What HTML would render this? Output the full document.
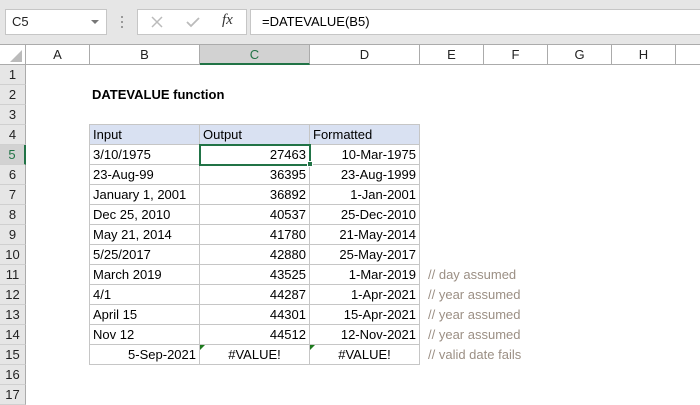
<!DOCTYPE html>
<html><head><style>
*{margin:0;padding:0;box-sizing:border-box}
body{width:700px;height:400px;overflow:hidden;background:#fff;font-family:"Liberation Sans",sans-serif;font-size:13px;color:#000;position:relative}
.a{position:absolute}
.hdr{background:#e6e6e6}
.ch{position:absolute;top:45px;height:20px;text-align:center;line-height:20px;color:#222;border-right:1px solid #ababab;font-size:13px}
.rh{position:absolute;left:0;width:26px;height:20px;text-align:center;line-height:20px;color:#222;background:#e6e6e6;border-bottom:1px solid #d0d0d0;border-right:1px solid #ababab;font-size:13px}
.c{position:absolute;height:21px;line-height:20px;border:1px solid #c6c6c6;padding:0 3px;white-space:nowrap;overflow:visible}
.r{text-align:right}
.cm{position:absolute;color:#9b8f84;font-size:13px;line-height:20px}
.tri{position:absolute;width:0;height:0;border-top:5px solid #1e7a1e;border-right:5px solid transparent}
</style></head><body>
<div class="a hdr" style="left:0;top:0;width:700px;height:45px;background:#e6e6e6;border-bottom:1px solid #ababab"></div>
<div class="a" style="left:5px;top:9px;width:102px;height:26px;background:#fff;border:1px solid #c6c6c6;line-height:24px;padding-left:6px;color:#222">C5</div>
<div class="a" style="left:91px;top:20px;width:0;height:0;border-left:4px solid transparent;border-right:4px solid transparent;border-top:4px solid #777"></div>
<div class="a" style="left:121px;top:16px;width:2px;height:2px;background:#999"></div>
<div class="a" style="left:121px;top:21px;width:2px;height:2px;background:#999"></div>
<div class="a" style="left:121px;top:26px;width:2px;height:2px;background:#999"></div>
<div class="a" style="left:137px;top:9px;width:110px;height:26px;background:#fff;border:1px solid #c6c6c6"></div>
<svg class="a" style="left:150px;top:15px" width="14" height="14"><path d="M2 2L12 12M12 2L2 12" stroke="#bbb" stroke-width="1.5"/></svg>
<svg class="a" style="left:185px;top:15px" width="16" height="14"><path d="M2 7L6 11L14 3" stroke="#bbb" stroke-width="1.8" fill="none"/></svg>
<div class="a" style="left:222px;top:12px;font-family:'Liberation Serif',serif;font-style:italic;font-size:15px;color:#333">fx</div>
<div class="a" style="left:250px;top:9px;width:460px;height:26px;background:#fff;border:1px solid #c6c6c6;line-height:24px;padding-left:11px;color:#000">=DATEVALUE(B5)</div>
<div class="a" style="left:0;top:64px;width:700px;height:1px;background:#ababab"></div>
<div class="ch" style="left:0;width:26px"><svg style="position:absolute;right:3px;bottom:3px" width="12" height="12"><path d="M12 0L12 12L0 12Z" fill="#bbb"/></svg></div>
<div class="ch" style="left:26px;width:64px">A</div>
<div class="ch" style="left:90px;width:110px">B</div>
<div class="ch" style="left:200px;width:110px;background:#d2d2d2;border-bottom:2px solid #217346;color:#217346">C</div>
<div class="ch" style="left:310px;width:110px">D</div>
<div class="ch" style="left:420px;width:64px">E</div>
<div class="ch" style="left:484px;width:64px">F</div>
<div class="ch" style="left:548px;width:64px">G</div>
<div class="ch" style="left:612px;width:64px">H</div>
<div class="rh" style="top:65px">1</div>
<div class="rh" style="top:85px">2</div>
<div class="rh" style="top:105px">3</div>
<div class="rh" style="top:125px">4</div>
<div class="rh" style="top:145px;background:#d2d2d2;border-right:2px solid #217346;color:#217346">5</div>
<div class="rh" style="top:165px">6</div>
<div class="rh" style="top:185px">7</div>
<div class="rh" style="top:205px">8</div>
<div class="rh" style="top:225px">9</div>
<div class="rh" style="top:245px">10</div>
<div class="rh" style="top:265px">11</div>
<div class="rh" style="top:285px">12</div>
<div class="rh" style="top:305px">13</div>
<div class="rh" style="top:325px">14</div>
<div class="rh" style="top:345px">15</div>
<div class="rh" style="top:365px">16</div>
<div class="rh" style="top:385px">17</div>
<div class="a" style="left:92px;top:85px;line-height:20px;font-weight:bold">DATEVALUE function</div>

<div class="c" style="left:89px;top:124px;width:111px;background:#d9e1f2">Input</div>
<div class="c" style="left:199px;top:124px;width:111px;background:#d9e1f2">Output</div>
<div class="c" style="left:309px;top:124px;width:111px;background:#d9e1f2">Formatted</div>

<div class="c" style="left:89px;top:144px;width:111px">3/10/1975</div><div class="c r" style="left:199px;top:144px;width:111px">27463</div><div class="c r" style="left:309px;top:144px;width:111px">10-Mar-1975</div>
<div class="c" style="left:89px;top:164px;width:111px">23-Aug-99</div><div class="c r" style="left:199px;top:164px;width:111px">36395</div><div class="c r" style="left:309px;top:164px;width:111px">23-Aug-1999</div>
<div class="c" style="left:89px;top:184px;width:111px">January 1, 2001</div><div class="c r" style="left:199px;top:184px;width:111px">36892</div><div class="c r" style="left:309px;top:184px;width:111px">1-Jan-2001</div>
<div class="c" style="left:89px;top:204px;width:111px">Dec 25, 2010</div><div class="c r" style="left:199px;top:204px;width:111px">40537</div><div class="c r" style="left:309px;top:204px;width:111px">25-Dec-2010</div>
<div class="c" style="left:89px;top:224px;width:111px">May 21, 2014</div><div class="c r" style="left:199px;top:224px;width:111px">41780</div><div class="c r" style="left:309px;top:224px;width:111px">21-May-2014</div>
<div class="c" style="left:89px;top:244px;width:111px">5/25/2017</div><div class="c r" style="left:199px;top:244px;width:111px">42880</div><div class="c r" style="left:309px;top:244px;width:111px">25-May-2017</div>
<div class="c" style="left:89px;top:264px;width:111px">March 2019</div><div class="c r" style="left:199px;top:264px;width:111px">43525</div><div class="c r" style="left:309px;top:264px;width:111px">1-Mar-2019</div>
<div class="c" style="left:89px;top:284px;width:111px">4/1</div><div class="c r" style="left:199px;top:284px;width:111px">44287</div><div class="c r" style="left:309px;top:284px;width:111px">1-Apr-2021</div>
<div class="c" style="left:89px;top:304px;width:111px">April 15</div><div class="c r" style="left:199px;top:304px;width:111px">44301</div><div class="c r" style="left:309px;top:304px;width:111px">15-Apr-2021</div>
<div class="c" style="left:89px;top:324px;width:111px">Nov 12</div><div class="c r" style="left:199px;top:324px;width:111px">44512</div><div class="c r" style="left:309px;top:324px;width:111px">12-Nov-2021</div>
<div class="c r" style="left:89px;top:344px;width:111px">5-Sep-2021</div><div class="c" style="left:199px;top:344px;width:111px;text-align:center">#VALUE!</div><div class="c" style="left:309px;top:344px;width:111px;text-align:center">#VALUE!</div>
<div class="tri" style="left:200px;top:345px"></div>
<div class="tri" style="left:310px;top:345px"></div>

<div class="a" style="left:199px;top:144px;width:112px;height:22px;border:2px solid #217346"></div>
<div class="a" style="left:307px;top:161px;width:6px;height:6px;background:#217346;border:1px solid #fff"></div>

<div class="cm" style="left:428px;top:265px">// day assumed</div>
<div class="cm" style="left:428px;top:285px">// year assumed</div>
<div class="cm" style="left:428px;top:305px">// year assumed</div>
<div class="cm" style="left:428px;top:325px">// year assumed</div>
<div class="cm" style="left:428px;top:345px">// valid date fails</div>
</body></html>
